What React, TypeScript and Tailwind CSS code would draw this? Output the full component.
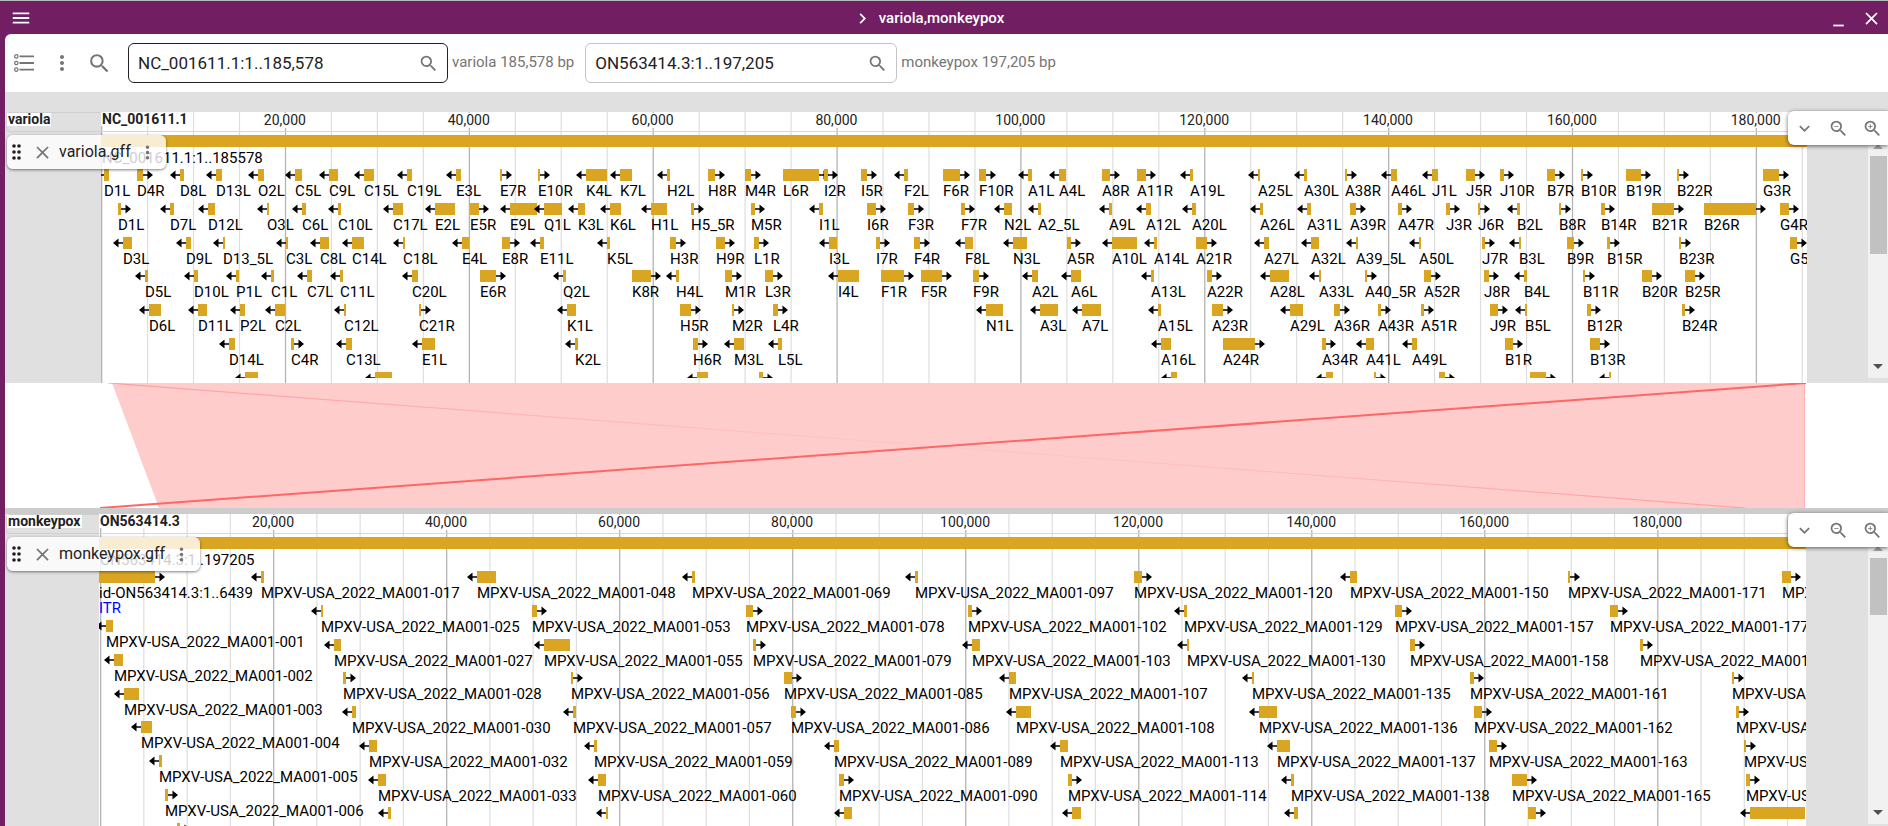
import React from 'react';
import {
  MdChevronRight,
  MdClose,
  MdExpandMore,
  MdMenu,
  MdMinimize,
  MdMoreVert,
  MdSearch,
  MdZoomIn,
  MdZoomOut,
} from 'react-icons/md';

type Direction = '<' | '>';

interface Feature {
  name: string;
  direction: Direction;
  start: number;
  width: number;
}

interface FeatureRow {
  top: number;
  features: Feature[];
}

interface Genome {
  assembly: string;
  refName: string;
  trackName: string;
  region: string;
  length: number;
  span: number;
  gridOffset: number;
  height: number;
  clipHeight: number;
  rows: FeatureRow[];
}

const GOLD = '#daa520';
const ROW_PITCH = 33.75;
const FIRST_ROW = 57;

/** Reads entries such as "D1L<104,5": name, strand, left edge, width. "-" marks an unnamed feature. */
function parseRow(text: string, origin: number): Feature[] {
  return text
    .trim()
    .split(/\s+/)
    .map((entry) => {
      const match = /^(.+)([<>])(\d+),(\d+)$/.exec(entry);
      if (!match) throw new Error(`bad feature ${entry}`);
      return {
        name: match[1] === '-' ? '' : match[1],
        direction: match[2] as Direction,
        start: Number(match[3]) - origin,
        width: Number(match[4]),
      };
    });
}

const rowTop = (index: number) => Math.round(FIRST_ROW + index * ROW_PITCH);

const variolaRows = [
  `D1L<104,5 D4R>137,6 D8L<180,4 D13L<216,6 O2L<258,6 C5L<295,7 C9L<329,9 C15L<364,10 C19L<407,5 E3L<456,5
   E7R>500,2 E10R>538,2 K4L<586,21 K7L<620,12 H2L<667,3 H8R>708,7 M4R>745,6 L6R>783,36 I2R>824,4 I5R>861,6
   F2L<904,4 F6R>943,17 F10R>979,7 A1L<1028,4 A4L<1059,7 A8R>1102,8 A11R>1137,9 A19L<1190,3 A25L<1258,2
   A30L<1304,3 A38R>1345,2 A46L<1391,6 J1L<1432,6 J5R>1466,9 J10R>1500,4 B7R>1547,8 B10R>1581,2 B19R>1626,15
   B22R>1677,2 G3R>1763,16`,
  `D1L>118,3 D7L<170,4 D12L<208,7 O3L<267,2 C6L<302,4 C10L<338,3 C17L<393,10 E2L<435,20 E5R>470,9 E9L<510,27
   Q1L<544,18 K3L<578,7 K6L<610,11 H1L<651,16 H5_5R>691,3 M5R>751,4 I1L<819,4 I6R>867,9 F3R>908,6 F7R>961,4
   N2L<1004,8 A2_5L<1038,3 A9L<1109,3 A12L<1146,5 A20L<1192,4 A26L<1260,3 A31L<1307,4 A39R>1350,6 A47R>1398,4
   J3R>1446,4 J6R>1478,2 B2L<1517,3 B8R>1559,2 B14R>1601,4 B21R>1652,22 B26R>1704,52 G4R>1780,9`,
  `D3L<123,9 D9L<186,5 D13_5L<223,2 C3L<286,2 C8L<320,9 C14L<352,12 C18L<403,2 E4L<462,7 E8R>502,8 E11L<540,4
   K5L<607,3 H3R>670,6 H9R>716,9 L1R>754,5 I3L<829,8 I7R>876,4 F4R>914,6 F8L<965,8 N3L<1013,14 A5R>1067,4
   A10L<1112,25 A14L<1154,3 A21R>1196,11 A27L<1264,5 A32L<1311,8 A39_5L<1356,2 A50L<1419,2 J7R>1482,3
   B3L<1519,2 B9R>1567,7 B15R>1607,3 B23R>1679,2 G5R>1790,7`,
  `D5L<145,3 D10L<194,4 P1L<236,3 C1L<271,3 C7L<307,5 C11L<340,3 C20L<412,6 E6R>480,16 Q2L<563,3 K8R>632,19
   H4L<676,3 M1R>725,7 L3R>765,8 I4L<838,21 F1R>881,23 F5R>921,21 F9R>973,6 A2L<1032,6 A6L<1071,10 A13L<1151,3
   A22R>1207,5 A28L<1270,19 A33L<1319,2 A40_5R>1365,2 A52R>1424,7 J8R>1484,5 B4L<1524,3 B11R>1583,2
   B20R>1642,10 B25R>1685,10`,
  `D6L<149,12 D11L<198,9 P2L<240,5 C2L<275,10 C12L<344,2 C21R>419,2 K1L<567,9 H5R>680,11 M2R>732,2 L4R>773,5
   N1L<986,17 A3L<1040,18 A7L<1082,19 A15L<1158,3 A23R>1212,11 A29L<1290,13 A36R>1334,6 A43R>1378,3 A51R>1421,3
   J9R>1490,8 B5L<1525,2 B12R>1587,4 B24R>1682,3`,
  `D14L<229,6 C4R>291,3 C13L<346,6 E1L<422,13 K2L<575,3 H6R>693,5 M3L<734,10 L5L<778,4 A16L<1161,10 A24R>1223,32
   A34R>1322,4 A41L<1366,8 A49L<1412,5 B1R>1505,8 B13R>1590,10`,
  `-<245,13 -<375,17 -<697,11 -<1171,6 -<1326,7 ->759,4 ->1374,2 ->1439,6 ->1530,16 -<1609,2`,
].map((text, index) => ({ top: rowTop(index), features: parseRow(text, 101) }));

const MPXV = 'MPXV-USA_2022_MA001-';

const monkeypoxRows = [
  `id-ON563414.3:1..6439>99,56 #017<261,3 #048<477,19 #069<692,3 #097<915,3 #120>1134,8 #150<1350,7 #171>1568,2 #184>1782,9`,
  `#025<321,2 #053>532,5 #078>746,7 #102>968,4 #129<1184,3 #157>1395,7 #177>1610,8`,
  `#027<334,7 #055<544,26 #079>753,3 #103<972,8 #130<1187,2 #158>1410,5 #178>1640,3`,
  `#028>343,3 #056>571,2 #085>784,8 #107<1009,7 #135<1252,2 #161>1470,4 #179>1732,2`,
  `#030<352,4 #057<573,3 #086>791,5 #108<1016,15 #136<1259,18 #162>1474,8 #180>1736,3`,
  `#032<369,8 #059<594,3 #089<834,5 #113<1060,8 #137<1277,13 #163>1489,8 #181>1744,2`,
  `#033<378,8 #060<598,8 #090>839,5 #114>1068,4 #138<1291,3 #165>1512,15 #182>1746,4`,
  `-<388,3 -<606,2 -<844,8 -<1072,9 -<1294,4 ->1528,8 -<1750,55`,
].map((text, index) => ({
  top: rowTop(index),
  features: parseRow(text.replaceAll('#', MPXV), 99),
}));

/** Features stacked under the repeat, which has a description line and so a taller box. */
const monkeypoxLeftColumn = ['#001<106,7', '#002<114,9', '#003<124,15', '#004<141,11', '#005<159,3', '#006>165,3', '->177,3'].map(
  (text, index) => ({
    top: Math.round(106 + index * ROW_PITCH),
    features: parseRow(text.replace('#', MPXV), 99),
  }),
);

const variola: Genome = {
  assembly: 'variola',
  refName: 'NC_001611.1',
  trackName: 'variola.gff',
  region: 'NC_001611.1:1..185578',
  length: 185578,
  span: 1706,
  gridOffset: 0,
  height: 271,
  clipHeight: 266,
  rows: variolaRows,
};

const monkeypox: Genome = {
  assembly: 'monkeypox',
  refName: 'ON563414.3',
  trackName: 'monkeypox.gff',
  region: 'ON563414.3:1..197205',
  length: 197205,
  span: 1707,
  gridOffset: 1,
  height: 312,
  clipHeight: 312,
  rows: [...monkeypoxRows, ...monkeypoxLeftColumn],
};

const percent = (value: number, span: number) => `${(value / span) * 100}%`;

function FeatureGlyph({ feature, top, span }: { feature: Feature; top: number; span: number }) {
  const { name, direction, start, width } = feature;
  return (
    <svg x={percent(start, span)} y={top} overflow="visible">
      <rect width={width} height={12} fill={GOLD} />
      {direction === '<' ? (
        <path d="M0 5.3H-4.5V1.4L-10 6L-4.5 10.6V6.7H0Z" fill="#000" />
      ) : (
        <path d={`M${width} 5.3h4.5V1.4l5.5 4.6l-5.5 4.6V6.7h-4.5Z`} fill="#000" />
      )}
      {name && (
        <text x={0} y={27} fontSize={15} fill="#000">
          {name}
        </text>
      )}
    </svg>
  );
}

function Grid({ genome }: { genome: Genome }) {
  const { length, span, gridOffset, height } = genome;
  const lines = [];
  for (let bp = 0; bp < length; bp += 5000) {
    const position = gridOffset + (bp / length) * (span - gridOffset);
    lines.push({ bp, x: percent(position, span), major: bp % 20000 === 0 });
  }
  return (
    <g>
      {lines.map(({ bp, x, major }) => (
        <svg key={bp} x={x} overflow="visible">
          <rect width={major ? 1.3 : 1.2} height={height} fill={major ? '#b4b4b4' : '#dedede'} />
        </svg>
      ))}
      <rect y={19} width="100%" height={1} fill="#d6d6d6" />
      {lines
        .filter(({ bp, major }) => major && bp > 0)
        .map(({ bp, x }) => (
          <svg key={bp} x={x} overflow="visible">
            <rect x={-24} y={1} width={48} height={15} fill="#fff" />
            <text y={13} fontSize={14} textAnchor="middle" fill="#222">
              {bp.toLocaleString('en-US')}
            </text>
          </svg>
        ))}
      <rect width={84} height={14} fill="#fff" />
      <text x={1} y={12} fontSize={14} fontWeight={700} fill="#222">
        {genome.refName}
      </text>
    </g>
  );
}

function DragDots() {
  return (
    <svg viewBox="0 0 9 16" className="h-4 w-[9px] fill-[#1f1f1f]" aria-hidden="true">
      {[2, 8, 14].map((y) => (
        <g key={y}>
          <circle cx={2} cy={y} r={1.8} />
          <circle cx={7} cy={y} r={1.8} />
        </g>
      ))}
    </svg>
  );
}

function TrackLabel({ name }: { name: string }) {
  return (
    <div className="absolute top-[23px] left-0.5 flex h-[34px] items-center rounded-md bg-white/80 pr-2 pl-[5px] shadow-[0_1px_3px_rgba(0,0,0,0.5)]">
      <button aria-label="Move track" className="mr-[11px]">
        <DragDots />
      </button>
      <button aria-label="Close track" className="mr-1.5 text-[#757575]">
        <MdClose size={21} />
      </button>
      <span className="text-base text-[#222]">{name}</span>
      <button aria-label="Track menu" className="ml-1.5 text-[#757575]">
        <MdMoreVert size={21} />
      </button>
    </div>
  );
}

function ZoomControls() {
  return (
    <div className="absolute -top-px right-0 flex h-[34px] w-[100px] items-center justify-between rounded-l-md bg-white pr-[5px] pl-1.5 text-[#757575] shadow-[0_1px_4px_rgba(0,0,0,0.6)]">
      <button aria-label="View menu">
        <MdExpandMore size={21} />
      </button>
      <button aria-label="Zoom out">
        <MdZoomOut size={21} />
      </button>
      <button aria-label="Zoom in">
        <MdZoomIn size={21} />
      </button>
    </div>
  );
}

function ScrollColumn({ className, thumb }: { className: string; thumb: string }) {
  return (
    <div className={`flex w-5 flex-col items-center bg-[#f1f1f1] ${className}`} aria-hidden="true">
      <svg viewBox="0 0 10 5" className="mt-8 h-[5px] w-2.5 shrink-0 fill-[#a3a3a3]">
        <path d="M0 5L5 0L10 5Z" />
      </svg>
      <div className={`mt-[7px] w-[17px] shrink-0 bg-[#c1c1c1] ${thumb}`} />
      <svg viewBox="0 0 10 5" className="mt-auto mb-[9px] h-[5px] w-2.5 shrink-0 fill-[#505050]">
        <path d="M0 0L5 5L10 0Z" />
      </svg>
    </div>
  );
}

interface GenomeViewProps {
  genome: Genome;
  leftGutter: string;
  rightGutter: string;
  thumb: string;
  scrollEnd: string;
  children?: React.ReactNode;
}

function GenomeView({ genome, leftGutter, rightGutter, thumb, scrollEnd, children }: GenomeViewProps) {
  return (
    <section className="relative flex bg-[#e0e0e0]" aria-label={genome.assembly}>
      <div className={`shrink-0 ${leftGutter}`}>
        <div className="ml-px h-5 rounded-l border border-r-0 border-[#cfcfcf]">
          <span className="block w-fit bg-white px-px text-sm leading-[13px] font-bold text-[#222]">{genome.assembly}</span>
        </div>
      </div>
      <svg height={genome.height} className="block min-w-0 flex-1 bg-white">
        <Grid genome={genome} />
        <rect y={23} width="100%" height={12} fill={GOLD} />
        <text x={1} y={51} fontSize={15}>
          {genome.region}
        </text>
        <svg width="100%" height={genome.clipHeight}>
          {genome.rows.map((row) =>
            row.features.map((feature) => (
              <FeatureGlyph key={`${row.top}-${feature.start}`} feature={feature} top={row.top} span={genome.span} />
            )),
          )}
          {children}
        </svg>
      </svg>
      <div className={`flex shrink-0 justify-end ${rightGutter}`}>
        <ScrollColumn className={scrollEnd} thumb={thumb} />
      </div>
      <TrackLabel name={genome.trackName} />
      <ZoomControls />
    </section>
  );
}

function Synteny() {
  return (
    <svg viewBox="0 0 1883 125" preserveAspectRatio="none" className="block h-[125px] w-full bg-white" role="img" aria-label="Synteny between variola and monkeypox">
      <defs>
        <linearGradient id="match-edge" gradientUnits="userSpaceOnUse" x1="103" y1="0" x2="1740" y2="0">
          <stop offset="0" stopColor="#ff9090" stopOpacity="0.8" />
          <stop offset="0.45" stopColor="#ff9c9c" stopOpacity="0.15" />
          <stop offset="0.6" stopColor="#ff9c9c" stopOpacity="0.15" />
          <stop offset="1" stopColor="#ff9090" stopOpacity="0.8" />
        </linearGradient>
      </defs>
      <path d="M107 0H1800V125H154Z" fill="#ffcccc" />
      <path d="M1799.5 0V125" stroke="#ffb3b3" strokeWidth={1} />
      <path d="M103 0L1740 125" stroke="url(#match-edge)" strokeWidth={1.2} />
      <path d="M95 125L1801 0" stroke="#ff6666" strokeWidth={2} />
    </svg>
  );
}

function SearchBox({ id, label, value, length, className }: { id: string; label: string; value: string; length: string; className: string }) {
  return (
    <div className="flex items-center">
      <div className={`flex h-10 items-center rounded-md border pr-2 pl-[9px] ${className}`}>
        <input id={id} defaultValue={value} className="w-full min-w-0 flex-1 bg-transparent pt-0.5 text-[17px] text-[#222] outline-none" />
        <MdSearch size={21} className="shrink-0 text-[#757575]" />
      </div>
      <label htmlFor={id} className="ml-1 pb-0.5 text-[15px] whitespace-nowrap text-[#757575]">
        {label} {length} bp
      </label>
    </div>
  );
}

function TrackListIcon() {
  return (
    <svg viewBox="0 0 20 18" className="h-[18px] w-5" fill="none" stroke="#757575" aria-hidden="true">
      {[2.4, 9, 15.6].map((y) => (
        <g key={y}>
          <circle cx={2.3} cy={y} r={1.7} strokeWidth={1.2} />
          <path d={`M5.5 ${y}H20`} strokeWidth={1.8} />
        </g>
      ))}
    </svg>
  );
}

export default function App() {
  return (
    <main className="flex min-h-screen flex-col overflow-hidden border-t border-[#b9b9b9] bg-[#721e63] font-['Roboto',sans-serif]">
      <header className="grid h-[33px] shrink-0 grid-cols-3 items-center pt-px pr-1.5 pl-2.5 text-white">
        <button aria-label="Menu" className="w-fit">
          <MdMenu size={22} />
        </button>
        <h1 className="flex items-center justify-center gap-1.5 pr-9 text-[15px] font-medium">
          <MdChevronRight size={21} />
          variola,monkeypox
        </h1>
        <div className="flex justify-end gap-3">
          <button aria-label="Minimize">
            <MdMinimize size={21} />
          </button>
          <button aria-label="Close">
            <MdClose size={21} />
          </button>
        </div>
      </header>
      <div className="ml-[5px] flex-1 overflow-hidden rounded-tl-md bg-white">
        <div className="flex h-[58px] items-center">
          <button aria-label="Open track selector" className="ml-[9px]">
            <TrackListIcon />
          </button>
          <button aria-label="More options" className="ml-4 text-[#757575]">
            <MdMoreVert size={24} />
          </button>
          <button aria-label="Search" className="ml-[13px] text-[#757575]">
            <MdSearch size={25} />
          </button>
          <div className="ml-4 flex items-center gap-[11px]">
            <SearchBox id="variola-location" label="variola" value="NC_001611.1:1..185,578" length="185,578" className="w-80 border-[#222]" />
            <SearchBox id="monkeypox-location" label="monkeypox" value="ON563414.3:1..197,205" length="197,205" className="w-[312px] border-[#c4c4c4]" />
          </div>
        </div>
        <div className="h-5 bg-[#e0e0e0]" />
        <GenomeView genome={variola} leftGutter="w-24" rightGutter="w-[81px]" thumb="h-[98px]" scrollEnd="mb-[5px]" />
        <Synteny />
        <div className="h-1.5 bg-[#cccccc]" />
        <GenomeView genome={monkeypox} leftGutter="w-[94px]" rightGutter="w-[82px]" thumb="h-[57px]" scrollEnd="mb-0.5">
          <text y={99} fontSize={15} fill="#0000ff">
            ITR
          </text>
        </GenomeView>
      </div>
    </main>
  );
}
